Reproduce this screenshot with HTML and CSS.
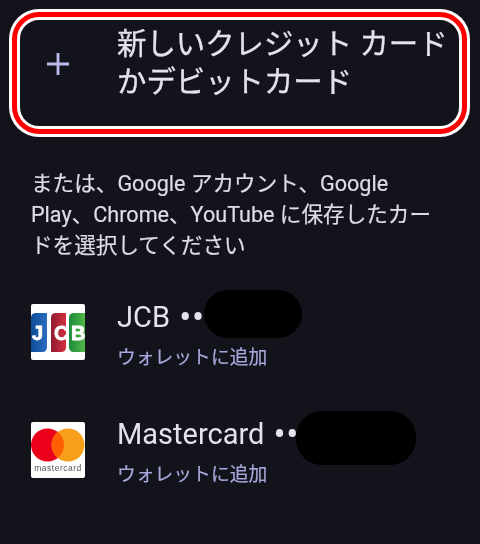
FILE: index.html
```html
<!DOCTYPE html>
<html lang="ja">
<head>
<meta charset="utf-8">
<title>カードの選択</title>
<link rel="stylesheet" href="styles.css">
</head>
<body>
<main class="page">
  <div class="add-card">
    <svg class="plus" viewBox="0 0 24 24" aria-hidden="true"><path d="M12 1V23M1 12H23"/></svg>
    <div class="add-label">新しいクレジット カード<br>かデビットカード</div>
  </div>
  <p class="note">または、Google アカウント、Google Play、Chrome、YouTube に保存したカードを選択してください</p>
  <div class="card-row">
    <svg class="logo" viewBox="0 0 54 56" aria-hidden="true">
      <rect width="54" height="56" rx="2" fill="#fff"/>
      <defs>
        <linearGradient id="b" x1="0" x2="1" y1="0" y2="0"><stop offset="0" stop-color="#0e4c96"/><stop offset="1" stop-color="#2a6cc0"/></linearGradient>
        <linearGradient id="r" x1="0" x2="1" y1="0" y2="0"><stop offset="0" stop-color="#8f1c33"/><stop offset="1" stop-color="#d4303f"/></linearGradient>
        <linearGradient id="g" x1="0" x2="1" y1="0" y2="0"><stop offset="0" stop-color="#1b8a3a"/><stop offset="1" stop-color="#52b848"/></linearGradient>
      </defs>
      <path d="M0 14Q0 9 5 9H16V43Q16 48 11 48H0Z" fill="url(#b)"/>
      <path d="M20 14Q20 9 25 9H35V43Q35 48 30 48H20Z" fill="url(#r)"/>
      <path d="M38 14Q38 9 43 9H54V48H43Q38 48 38 43Z" fill="url(#g)"/>
      <text class="jcb-mark" x="1 23 40" y="36">JCB</text>
    </svg>
    <div class="card-text">
      <div class="card-name">JCB <span class="dots">•••</span></div>
      <div class="card-action">ウォレットに追加</div>
    </div>
    <div class="mask mask-jcb"></div>
  </div>
  <div class="card-row">
    <svg class="logo" viewBox="0 0 54 56" aria-hidden="true">
      <rect width="54" height="56" rx="2" fill="#fff"/>
      <circle cx="16.500" cy="23" r="16.500" fill="#eb001b"/>
      <circle cx="37" cy="23" r="16.500" fill="#f79e1b"/>
      <path d="M26.750 10.100A16.500 16.500 0 0 1 26.750 35.900A16.500 16.500 0 0 1 26.750 10.100Z" fill="#ff5f00"/>
      <text class="mc-mark" x="27" y="49">mastercard</text>
    </svg>
    <div class="card-text">
      <div class="card-name">Mastercard <span class="dots">••</span></div>
      <div class="card-action">ウォレットに追加</div>
    </div>
    <div class="mask mask-mc"></div>
  </div>
</main>
</body>
</html>
```
FILE: styles.css
```css
* { box-sizing: border-box; }
html, body { margin: 0; height: 100%; }
body {
  background: #13131b;
  color: #e4e2ea;
  font-family: Roboto, "Noto Sans CJK JP", sans-serif;
  overflow: hidden;
}
.page { padding: 17px 0 0; }
.add-card {
  margin: 0 18px 0 17px;
  height: 112px;
  border: 3px solid #fff;
  border-radius: 22px;
  box-shadow: 0 0 0 5px #f00, 0 0 0 8px #fff;
  display: flex;
  align-items: flex-start;
  padding: 5px 0 0 26px;
  background: #13131b;
}
.plus {
  width: 24px;
  height: 24px;
  margin-top: 27px;
  flex: none;
  fill: none;
  stroke: #bdbcf0;
  stroke-width: 2.800;
}
.add-label {
  margin-left: 47px;
  font-size: 29.400px;
  line-height: 38px;
  white-space: nowrap;
  -webkit-text-stroke: 0.3px;
  filter: blur(0.4px);
}
.note {
  margin: 39px 40px 0 31px;
  font-size: 21.600px;
  line-height: 31px;
  color: #dedce4;
  -webkit-text-stroke: 0.2px;
  filter: blur(0.4px);
}
.card-row {
  position: relative;
  display: flex;
  align-items: flex-start;
  margin: 38px 0 0 31px;
}
.card-row + .card-row { margin-top: 45px; }
.logo {
  width: 54px;
  height: 56px;
  flex: none;
  margin-top: 5px;
  filter: blur(0.6px);
}
.card-row + .card-row .logo { margin-top: 6px; }
.jcb-mark {
  font: 900 20px "Liberation Sans", sans-serif;
  fill: #fff;
  stroke: #fff;
  stroke-width: 0.8;
}
.mc-mark {
  font: 400 8.500px "Liberation Sans", sans-serif;
  fill: #555;
  text-anchor: middle;
  letter-spacing: 0.5px;
}
.card-text { margin-left: 32px; white-space: nowrap; filter: blur(0.4px); }
.card-name { font-size: 29px; line-height: 36px; }
.dots { font-size: 36px; line-height: 0; letter-spacing: 0.6px; margin-left: 2px; vertical-align: -3px; }
.card-action {
  font-size: 18.800px;
  line-height: 26px;
  margin-top: 10px;
  color: #a9a8dc;
  -webkit-text-stroke: 0.2px;
}
.mask { position: absolute; background: #000; border-radius: 26px; }
.mask-jcb { left: 173px; top: -9px; width: 98px; height: 48px; }
.mask-mc { left: 265px; top: -5px; width: 120px; height: 54px; }
```
